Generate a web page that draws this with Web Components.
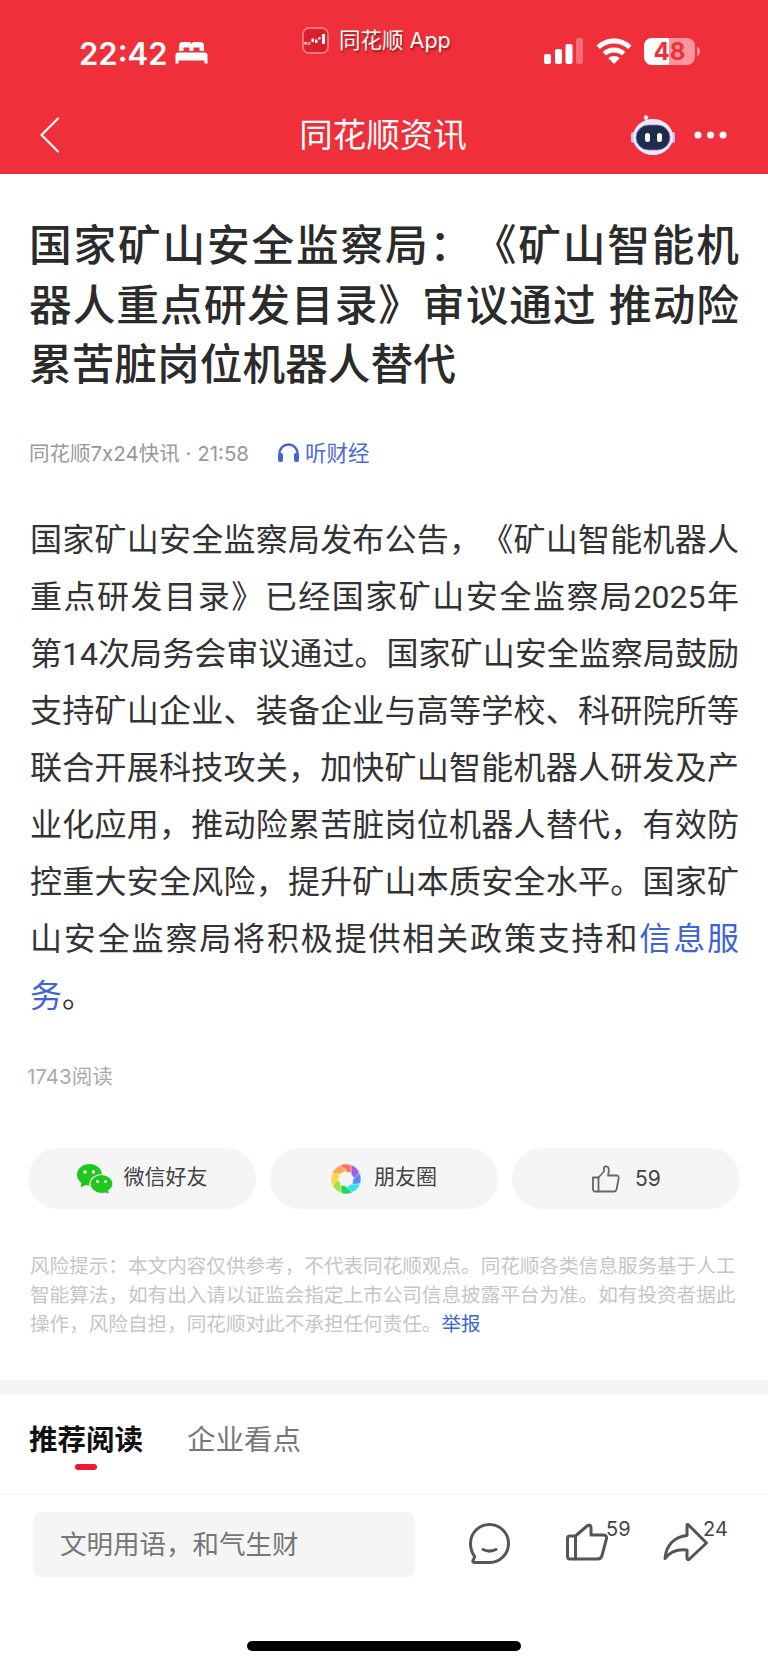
<!DOCTYPE html>
<html lang="zh-CN">
<head>
<meta charset="utf-8">
<title>同花顺资讯</title>
<style>
    html, body {
        margin: 0;
        padding: 0;
        background: #fff;
    }

    body {
        width: 768px;
        height: 1665px;
        overflow: hidden;
        display: flex;
        flex-direction: column;
        font-family: Inter, "Noto Sans CJK SC", sans-serif;
        text-spacing-trim: space-all;
    }
</style>
</head>
<body>
<news-header></news-header>
<article-head>
    国家矿山安全监察局：《矿山智能机器人重点研发目录》审议通过 推动险累苦脏岗位机器人替代
</article-head>
<article-body>
    国家矿山安全监察局发布公告，《矿山智能机器人重点研发目录》已经国家矿山安全监察局2025年第14次局务会审议通过。国家矿山安全监察局鼓励支持矿山企业、装备企业与高等学校、科研院所等联合开展科技攻关，加快矿山智能机器人研发及产业化应用，推动险累苦脏岗位机器人替代，有效防控重大安全风险，提升矿山本质安全水平。国家矿山安全监察局将积极提供相关政策支持和<a href="#">信息服务</a>。
</article-body>
<share-row></share-row>
<risk-note></risk-note>
<tab-strip></tab-strip>
<comment-bar></comment-bar>

<script>
// header: status bar plus the red navigation row
class NewsHeader extends HTMLElement {
    constructor() {
        super();
        const shadow = this.attachShadow({ mode: 'open' });
        shadow.innerHTML = `
            <style>
                :host {
                    display: block;
                    height: 174px;
                    background: #ef2f39;
                    color: #fff;
                    flex: none;
                }
                .status {
                    height: 100px;
                    display: flex;
                    align-items: flex-start;
                    padding: 0 68px 0 79px;
                    box-sizing: border-box;
                }
                .time {
                    font-size: 31px;
                    font-weight: 600;
                    line-height: 38px;
                    margin-top: 35px;
                    width: 88px;
                }
                .bed {
                    margin: 41px 0 0 8px;
                }
                .app {
                    display: flex;
                    align-items: center;
                    gap: 10px;
                    margin: 26px 0 0 94px;
                    font-size: 21.500px;
                    line-height: 28px;
                    text-shadow: 1px 2px 2px rgba(90, 0, 0, .55);
                }
                .right {
                    margin-left: auto;
                    display: flex;
                    align-items: flex-start;
                    gap: 12px;
                    padding-top: 38px;
                }
                .nav {
                    height: 74px;
                    display: flex;
                    align-items: center;
                    padding: 0 41px 4px 40px;
                    box-sizing: border-box;
                }
                .title {
                    flex: 1;
                    text-align: center;
                    font-size: 33.500px;
                    line-height: 44px;
                    padding-left: 76px;
                }
                .tools {
                    display: flex;
                    align-items: center;
                    gap: 19px;
                }
            </style>
            <div class="status">
                <span class="time">22:42</span>
                <svg class="bed" width="33" height="23" viewBox="0 0 33 23" fill="#fff">
                    <path d="M4 10V4.500C4 2.500 5.500 1 7.500 1h6.500c1.500 0 2.500 1 2.500 2.500 0-1.500 1-2.500 2.500-2.500h6.500c2 0 3.500 1.500 3.500 3.500V10h-4.500V6.500h-6V10h-4V6.500h-6V10z"/>
                    <path d="M3 11.500h27c1.500 0 2.500 1 2.500 2.500v8.500h-3V19.500h-26v3H.5V14c0-1.500 1-2.500 2.500-2.500z"/>
                </svg>
                <span class="app">
                    <svg width="27" height="27" viewBox="0 0 27 27">
                        <rect x="1" y="1" width="25" height="25" rx="6" fill="#d9202c" stroke="#f98d92" stroke-width="1.500"/>
                        <g fill="#fff">
                            <rect x="2.500" y="15" width="2" height="2.500"/>
                            <rect x="6" y="15.500" width="2" height="2" fill="none" stroke="#fff" stroke-width=".6"/>
                            <rect x="9.500" y="11.500" width="2.400" height="3.500"/>
                            <rect x="13" y="12.500" width="2.400" height="3.500"/>
                            <rect x="16.500" y="10" width="2" height="2.500"/>
                            <rect x="20" y="7" width="3" height="10"/>
                        </g>
                    </svg>
                    同花顺 App
                </span>
                <span class="right">
                    <svg width="40" height="26" viewBox="0 0 40 26" fill="#fff">
                        <rect x="0" y="16" width="7" height="10" rx="2"/>
                        <rect x="11" y="11" width="7" height="15" rx="2"/>
                        <rect x="21.500" y="6" width="7" height="20" rx="2"/>
                        <rect x="32" y="0" width="7" height="26" rx="2" fill-opacity=".3"/>
                    </svg>
                    <svg width="36" height="26" viewBox="0 0 36 26" fill="#fff">
                        <path d="M18 .5C11 .5 5 3.200 .5 7.500l3.300 3.600C7.500 7.500 12.500 5.500 18 5.500s10.500 2 14.200 5.600l3.300-3.600C31 3.200 25 .5 18 .5z"/>
                        <path d="M18 9.500c-4.500 0-8.500 1.700-11.300 4.500l3.300 3.600c2.100-2 4.900-3.100 8-3.100s5.900 1.100 8 3.100l3.300-3.600C26.500 11.200 22.500 9.500 18 9.500z"/>
                        <path d="M18 18c-2.300 0-4.300.9-5.700 2.300L18 26l5.700-5.700C22.300 18.900 20.300 18 18 18z"/>
                    </svg>
                    <svg width="56" height="27" viewBox="0 0 56 27">
                        <defs>
                            <clipPath id="cell"><rect x="0" y="0" width="51" height="27" rx="8"/></clipPath>
                        </defs>
                        <g clip-path="url(#cell)">
                            <rect x="0" y="0" width="51" height="27" fill="#fff" fill-opacity=".5"/>
                            <rect x="0" y="0" width="25" height="27" fill="#fff"/>
                        </g>
                        <path d="M53 9c2 .4 3 2.200 3 4.500s-1 4.100-3 4.500z" fill="#fff" fill-opacity=".5"/>
                        <text x="25.500" y="22" text-anchor="middle" font-size="24" font-weight="700" fill="#ef2f39" font-family="Inter, sans-serif">48</text>
                    </svg>
                </span>
            </div>
            <div class="nav">
                <svg width="19" height="36" viewBox="0 0 19 36" fill="none" stroke="#fff" stroke-width="2.200" stroke-linecap="round">
                    <path d="M18 1.500 1.500 18 18 34.500"/>
                </svg>
                <span class="title">同花顺资讯</span>
                <span class="tools">
                    <svg width="44" height="40" viewBox="0 0 44 40">
                        <path d="M16 6c-1-2-1.500-3-1-4" stroke="#e8e4f4" stroke-width="1.500" fill="none"/>
                        <circle cx="15" cy="2.500" r="2.200" fill="#ece8f6"/>
                        <rect x="0" y="17" width="5" height="11" rx="2.500" fill="#c9c2ea"/>
                        <rect x="39" y="17" width="5" height="11" rx="2.500" fill="#c9c2ea"/>
                        <ellipse cx="22" cy="22" rx="20" ry="18" fill="#eeeaf8"/>
                        <rect x="5" y="10" width="34" height="25" rx="12.500" fill="#1f2c4c" stroke="#8f7ce0" stroke-width=".8"/>
                        <rect x="14" y="18" width="5" height="9" rx="2.500" fill="#fff"/>
                        <rect x="26" y="18" width="5" height="9" rx="2.500" fill="#fff"/>
                    </svg>
                    <svg width="33" height="8" viewBox="0 0 33 8" fill="#fff">
                        <circle cx="4" cy="4" r="3.500"/>
                        <circle cx="16.500" cy="4" r="3.500"/>
                        <circle cx="29" cy="4" r="3.500"/>
                    </svg>
                </span>
            </div>
        `;
    }
}

// headline and the source line under it
class ArticleHead extends HTMLElement {
    constructor() {
        super();
        const shadow = this.attachShadow({ mode: 'open' });
        shadow.innerHTML = `
            <style>
                :host {
                    display: block;
                    padding: 42px 29px 0 29px;
                    flex: none;
                }
                h1 {
                    margin: 0;
                    font-size: 42.700px;
                    line-height: 59.500px;
                    font-weight: 500;
                    text-align: justify;
                    color: #2b2b2b;
                }
                .meta {
                    display: flex;
                    align-items: center;
                    height: 30px;
                    margin-top: 42px;
                    font-size: 20.500px;
                    color: #999;
                }
                .listen {
                    display: flex;
                    align-items: center;
                    gap: 5px;
                    margin-left: 28px;
                    font-size: 21.500px;
                    color: #4a6ae0;
                }
            </style>
            <h1><slot></slot></h1>
            <div class="meta">
                <span>同花顺7x24快讯 · 21:58</span>
                <span class="listen">
                    <svg width="23" height="20" viewBox="0 0 23 20" fill="none">
                        <path d="M2.500 14V11.500a9 9 0 0 1 18 0V14" stroke="#4364d8" stroke-width="2.400"/>
                        <rect x="1" y="11" width="5" height="9" rx="2" fill="#4364d8"/>
                        <rect x="17" y="11" width="5" height="9" rx="2" fill="#4364d8"/>
                    </svg>
                    听财经
                </span>
            </div>
        `;
    }
}

class ArticleBody extends HTMLElement {
    constructor() {
        super();
        const shadow = this.attachShadow({ mode: 'open' });
        shadow.innerHTML = `
            <style>
                :host {
                    display: block;
                    padding: 45px 29px 0 30px;
                    flex: none;
                }
                .text {
                    font-family: Roboto, "Noto Sans CJK SC", sans-serif;
                    font-size: 32px;
                    line-height: 57.100px;
                    text-align: justify;
                    color: #333;
                }
                ::slotted(a) {
                    color: #3d63d8;
                    text-decoration: none;
                }
                .reads {
                    margin: 37px 0 0 -3px;
                    font-size: 20.500px;
                    line-height: 30px;
                    color: #aaa;
                }
            </style>
            <div class="text"><slot></slot></div>
            <div class="reads">1743阅读</div>
        `;
    }
}

// single grey pill, icon goes in the named slot
class SharePill extends HTMLElement {
    constructor() {
        super();
        const shadow = this.attachShadow({ mode: 'open' });
        shadow.innerHTML = `
            <style>
                :host {
                    display: flex;
                    align-items: center;
                    justify-content: center;
                    gap: 11px;
                    height: 61px;
                    border-radius: 31px;
                    background: #f5f5f5;
                    font-size: 21px;
                    color: #444;
                }
                /* chinese labels sit low in the line box, lift them */
                :host([label]) .text {
                    margin-bottom: 8px;
                }
            </style>
            <slot name="icon"></slot>
            <span class="text"><slot></slot></span>
        `;
    }
}

class ShareRow extends HTMLElement {
    constructor() {
        super();
        const shadow = this.attachShadow({ mode: 'open' });
        // aperture blades of the moments icon
        const colors = ['#fb6f5c', '#a05cf5', '#4f8ffb', '#2fe0fb', '#22d95a', '#a8e23c', '#fbd53a', '#fba94a'];
        const blades = colors.map((c, i) =>
            `<path transform="rotate(${i * 45} 15 15)" d="M15.500 8 8.500 1.500A15 15 0 0 1 19.500 .7L22 9z" fill="${c}" stroke="#f5f5f5" stroke-width=".5"/>`
        ).join('');
        shadow.innerHTML = `
            <style>
                :host {
                    display: grid;
                    grid-template-columns: repeat(3, 228px);
                    gap: 14px;
                    margin: 56px 0 0 28px;
                    flex: none;
                }
            </style>
            <share-pill label>
                <svg slot="icon" width="36" height="30" viewBox="0 0 36 30">
                    <path d="M12.500 0C5.600 0 0 4.800 0 10.800c0 3.300 1.700 6.200 4.400 8.200L3.600 23.500l5-2.600c1.200.3 2.500.5 3.900.5 6.900 0 12.500-4.800 12.500-10.600S19.400 0 12.500 0z" fill="#1fc81f"/>
                    <circle cx="8" cy="8" r="1.700" fill="#fff"/>
                    <circle cx="16.500" cy="8" r="1.700" fill="#fff"/>
                    <path d="M24.500 10.500c-6.400 0-11.500 4.300-11.500 9.500s5.100 9.500 11.500 9.500c1.300 0 2.500-.2 3.600-.5l4.400 1-.8-3.500c2.900-1.700 4.300-3.700 4.300-6.500 0-5.200-5.100-9.500-11.500-9.500z" fill="#1fc81f" stroke="#f5f5f5" stroke-width="1.200"/>
                    <circle cx="20.500" cy="17.500" r="1.500" fill="#fff"/>
                    <circle cx="28.500" cy="17.500" r="1.500" fill="#fff"/>
                </svg>
                微信好友
            </share-pill>
            <share-pill label style="gap:13px">
                <svg slot="icon" width="30" height="30" viewBox="0 0 30 30">
                    ${blades}
                </svg>
                朋友圈
            </share-pill>
            <share-pill>
                <svg slot="icon" width="30" height="28" viewBox="0 0 30 28" fill="none" stroke="#666" stroke-width="1.800" stroke-linejoin="round" style="margin-right:3px">
                    <path d="M2 12.500h5.500V26.500H4a2 2 0 0 1-2-2z"/>
                    <path d="M7.500 12.500 13 6.500V3c0-2 3.500-2.500 4.500 0 .7 2 .2 4.500-.5 7.500h8.500c1.500 0 2.500 1.200 2.200 2.700L25.500 24.500c-.3 1.200-1.200 2-2.500 2H7.500"/>
                </svg>
                59
            </share-pill>
        `;
    }
}

class RiskNote extends HTMLElement {
    constructor() {
        super();
        const shadow = this.attachShadow({ mode: 'open' });
        shadow.innerHTML = `
            <style>
                :host {
                    display: block;
                    margin-top: 43px;
                    padding: 0 28px 0 30px;
                    height: 128px;
                    box-sizing: border-box;
                    flex: none;
                    font-size: 19.600px;
                    line-height: 29px;
                    color: #c6c6c6;
                }
                a {
                    color: #3d63d8;
                    text-decoration: none;
                }
            </style>
            风险提示：本文内容仅供参考，不代表同花顺观点。同花顺各类信息服务基于人工智能算法，如有出入请以证监会指定上市公司信息披露平台为准。如有投资者据此操作，风险自担，同花顺对此不承担任何责任。<a href="#">举报</a>
        `;
    }
}

class TabStrip extends HTMLElement {
    constructor() {
        super();
        const shadow = this.attachShadow({ mode: 'open' });
        shadow.innerHTML = `
            <style>
                :host {
                    display: block;
                    border-top: 14px solid #f5f5f5;
                    height: 99px;
                    flex: none;
                }
                .tabs {
                    display: flex;
                    gap: 44px;
                    padding: 26px 0 0 29px;
                    font-size: 28.500px;
                    line-height: 40px;
                    color: #777;
                }
                .on {
                    position: relative;
                    font-weight: 700;
                    color: #111;
                }
                .on::after {
                    content: "";
                    position: absolute;
                    left: 46px;
                    top: 44px;
                    width: 22px;
                    height: 6px;
                    border-radius: 3px;
                    background: #f0162f;
                }
            </style>
            <div class="tabs">
                <span class="on">推荐阅读</span>
                <span>企业看点</span>
            </div>
        `;
    }
}

// comment box, action icons and the home indicator
class CommentBar extends HTMLElement {
    constructor() {
        super();
        const shadow = this.attachShadow({ mode: 'open' });
        shadow.innerHTML = `
            <style>
                :host {
                    display: block;
                    margin-top: auto;
                    border-top: 1px solid #f3f3f3;
                    flex: none;
                }
                .row {
                    display: flex;
                    height: 65px;
                    margin-top: 17px;
                    padding-left: 33px;
                }
                .input {
                    width: 382px;
                    box-sizing: border-box;
                    padding-left: 27px;
                    border-radius: 8px;
                    background: #f5f5f5;
                    font-size: 26.500px;
                    line-height: 64px;
                    color: #777;
                }
                .act {
                    position: relative;
                    display: block;
                    margin-top: 11px;
                }
                .act b {
                    position: absolute;
                    top: -6px;
                    left: 40px;
                    font-weight: 400;
                    font-size: 20px;
                    line-height: 24px;
                    color: #444;
                }
                .home {
                    width: 274px;
                    height: 10px;
                    margin: 64px auto 14px;
                    border-radius: 5px;
                    background: #000;
                }
            </style>
            <div class="row">
                <div class="input">文明用语，和气生财</div>
                <span class="act" style="margin-left:54px">
                    <svg width="41" height="41" viewBox="0 0 41 41" fill="none" stroke="#555" stroke-width="3" stroke-linecap="round" stroke-linejoin="round">
                        <path d="M20.500 1.500c10.500 0 19 8.300 19 19s-8.500 19-19 19H5c-1 0-1.500-1-1-1.800l1.700-4C3 30 1.500 25.500 1.500 20.500c0-10.700 8.500-19 19-19z"/>
                        <path d="M14 26.500c4 2 9 2 13 0"/>
                    </svg>
                </span>
                <span class="act" style="margin-left:56px">
                    <svg width="42" height="38" viewBox="0 0 42 38" fill="none" stroke="#555" stroke-width="3" stroke-linejoin="round">
                        <path d="M9.500 13H4a2.500 2.500 0 0 0-2.500 2.500v18A2.500 2.500 0 0 0 4 36h5.500z"/>
                        <path d="M9.500 13 21 3c1.500-1.500 4-1 4 1.500V12h12.500c2 0 3.500 1.500 3 3.500L36 32.500c-.6 2.200-2 3.500-4 3.500H9.500"/>
                    </svg>
                    <b>59</b>
                </span>
                <span class="act" style="margin-left:55px">
                    <svg width="45" height="38" viewBox="0 0 45 38" fill="none" stroke="#555" stroke-width="3" stroke-linecap="round" stroke-linejoin="round">
                        <path d="M25 1.500 43.500 20 26 36.500c-1 .5-2 0-2-1.500v-8c-9-1-16 .5-22 8.500C3 22 12 13.500 24 12.500V3c0-1.500.5-2 1-1.500z"/>
                    </svg>
                    <b>24</b>
                </span>
            </div>
            <div class="home"></div>
        `;
    }
}

customElements.define('news-header', NewsHeader);
customElements.define('article-head', ArticleHead);
customElements.define('article-body', ArticleBody);
customElements.define('share-pill', SharePill);
customElements.define('share-row', ShareRow);
customElements.define('risk-note', RiskNote);
customElements.define('tab-strip', TabStrip);
customElements.define('comment-bar', CommentBar);
</script>
</body>
</html>
